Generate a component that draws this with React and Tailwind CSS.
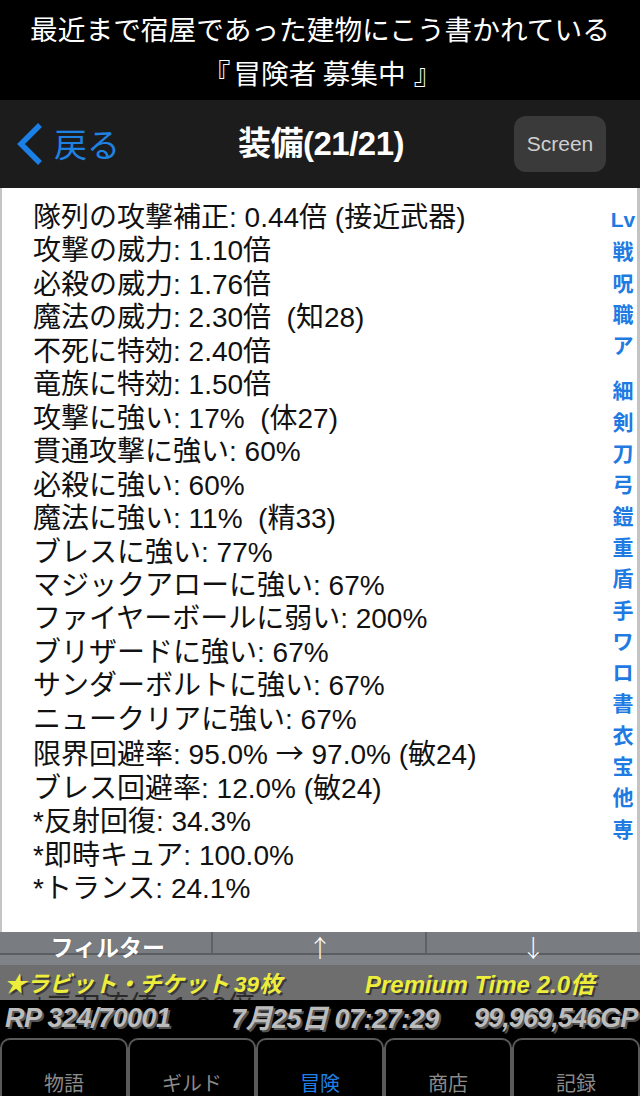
import React from "react";

const lines = [
  "隊列の攻撃補正: 0.44倍 (接近武器)",
  "攻撃の威力: 1.10倍",
  "必殺の威力: 1.76倍",
  "魔法の威力: 2.30倍  (知28)",
  "不死に特効: 2.40倍",
  "竜族に特効: 1.50倍",
  "攻撃に強い: 17%  (体27)",
  "貫通攻撃に強い: 60%",
  "必殺に強い: 60%",
  "魔法に強い: 11%  (精33)",
  "ブレスに強い: 77%",
  "マジックアローに強い: 67%",
  "ファイヤーボールに弱い: 200%",
  "ブリザードに強い: 67%",
  "サンダーボルトに強い: 67%",
  "ニュークリアに強い: 67%",
  "ARROW",
  "ブレス回避率: 12.0% (敏24)",
  "*反射回復: 34.3%",
  "*即時キュア: 100.0%",
  "*トランス: 24.1%",
];

const idxA = ["Lv", "戦", "呪", "職", "ア"];
const idxB = ["細", "剣", "刀", "弓", "鎧", "重", "盾", "手", "ワ", "ロ", "書", "衣", "宝", "他", "専"];

const tabs = ["物語", "ギルド", "冒険", "商店", "記録"];

export default function App() {
  return (
    <div className="w-[640px] h-[1096px] bg-black overflow-hidden font-['Liberation_Sans','Noto_Sans_CJK_JP',sans-serif]">
      {/* top banner */}
      <div className="h-[100px] bg-black flex flex-col items-center pt-[6px] text-white text-[27.7px] leading-[44px] font-['Noto_Sans_CJK_JP',sans-serif]">
        <div>最近まで宿屋であった建物にこう書かれている</div>
        <div className="whitespace-pre pl-[4px]">
          『<span className="ml-[3px]">冒険者 募集中</span><span className="ml-[8px]">』</span>
        </div>
      </div>

      {/* nav bar */}
      <div className="h-[88px] bg-[#1c1c1c] flex items-center relative">
        <div className="flex items-center pl-[16px]">
          <svg width="28" height="44" viewBox="0 0 28 44" className="mr-[10px]">
            <polyline points="24,3 5,22 24,41" fill="none" stroke="#1a7fe6" strokeWidth="5.5" strokeLinecap="butt" strokeLinejoin="miter" />
          </svg>
          <span className="text-[#1f82e3] text-[33px] font-['Noto_Sans_CJK_JP',sans-serif] leading-none -mt-[2px]">戻る</span>
        </div>
        <div className="absolute left-0 right-0 top-0 h-full flex items-center justify-center pointer-events-none">
          <span className="text-white text-[33px] font-bold tracking-[-0.5px] pl-[2px]">装備(21/21)</span>
        </div>
        <div className="ml-auto mr-[34px] w-[92px] h-[56px] rounded-[12px] bg-[#3a3a3a] flex items-center justify-center text-[#cfcfcf] text-[21px]">
          Screen
        </div>
      </div>

      {/* content */}
      <div className="relative h-[812px] overflow-hidden">
        <div className="h-full bg-white border-l-[2px] border-r-[3px] border-[#c4c4c4] flex">
          <div className="flex-1 pl-[31px] pt-[13px] text-[#111] text-[28px] leading-[33.45px] whitespace-pre">
            {lines.map((l, i) =>
              l === "ARROW" ? (
                <div key={i}>
                  限界回避率: 95.0% <span className="font-['Noto_Sans_CJK_JP',sans-serif]">→</span> 97.0% (敏24)
                </div>
              ) : (
                <div key={i}>{l}</div>
              )
            )}
          </div>
          <div className="w-[26px] mr-[1px] pt-[16px] text-[#1f7be2] text-[21px] font-bold leading-[31.3px] flex flex-col items-center font-['Noto_Sans_CJK_JP',sans-serif]">
            {idxA.map((c) => (
              <div key={c} className={c === "Lv" ? "font-['Liberation_Sans',sans-serif]" : ""}>{c}</div>
            ))}
            <div className="h-[14px]" />
            {idxB.map((c) => (
              <div key={c}>{c}</div>
            ))}
          </div>
        </div>

        {/* overlay bars */}
        <div className="absolute left-0 right-0 bottom-0 h-[68px] flex flex-col">
          <div className="relative h-[33px] bg-[#7f8286]">
            <div className="h-[23px] grid grid-cols-3 border-b-[2px] border-[#5a5d61] bg-[#797c80]">
              <div className="border-r-[2px] border-[#5f6266]" />
              <div className="border-r-[2px] border-[#5f6266]" />
              <div />
            </div>
            <div className="absolute inset-0 grid grid-cols-3 items-center text-white">
              <div className="flex justify-center pl-[2px] -mt-[4px] text-[23px] font-bold font-['Noto_Sans_CJK_JP',sans-serif] [text-shadow:0_0_1px_#445]">フィルター</div>
              <div className="flex justify-center -mt-[4px] text-[24px] font-['Noto_Sans_CJK_JP',sans-serif] font-light">↑</div>
              <div className="flex justify-center -mt-[4px] text-[24px] font-['Noto_Sans_CJK_JP',sans-serif] font-light">↓</div>
            </div>
          </div>
          <div className="relative h-[35px] bg-[#6e6e6e] overflow-hidden">
            <div className="absolute left-[34px] top-[25px] h-[10px] overflow-hidden">
              <div className="text-[#2a2a2a] text-[28px] leading-[33px] whitespace-pre">*二刀流値: 1.00倍</div>
            </div>
            <div className="relative flex items-center h-full pt-[2px] text-[#eded3c] font-bold italic [text-shadow:2px_2px_0_#3a3a3a]">
              <span className="pl-[4px] text-[22.5px] font-['Noto_Sans_CJK_JP',sans-serif] font-bold">★ラビット・チケット <span className="font-['Liberation_Sans','Noto_Sans_CJK_JP',sans-serif]">39枚</span></span>
              <span className="ml-auto mr-[46px] text-[24px]">Premium Time 2.0<span className="font-['Noto_Sans_CJK_JP',sans-serif]">倍</span></span>
            </div>
          </div>
        </div>
      </div>

      {/* status bar */}
      <div className="h-[36px] bg-black flex items-center text-[#bcbcbc] text-[27px] font-bold italic whitespace-nowrap [text-shadow:2px_2px_0_#555] tracking-[-0.5px]">
        <span className="w-[231px] pl-[5px] shrink-0">RP 324/70001</span>
        <span className="w-[243px] shrink-0">7<span className="font-['Noto_Sans_CJK_JP',sans-serif]">月</span>25<span className="font-['Noto_Sans_CJK_JP',sans-serif]">日</span> 07:27:29</span>
        <span className="shrink-0 tracking-[-0.9px]">99,969,546GP</span>
      </div>

      {/* tab bar */}
      <div className="h-[60px] bg-black grid grid-cols-5 pt-[2px]">
        {tabs.map((t, i) => (
          <div
            key={t}
            className={
              "h-[58px] border-2 border-b-0 border-[#5a5a5a] rounded-t-[10px] flex justify-center pt-[28px] text-[20px] font-['Noto_Sans_CJK_JP',sans-serif] " +
              (i === 2 ? "text-[#1f7fe6]" : "text-[#8a8a8a]")
            }
          >
            {t}
          </div>
        ))}
      </div>
    </div>
  );
}
